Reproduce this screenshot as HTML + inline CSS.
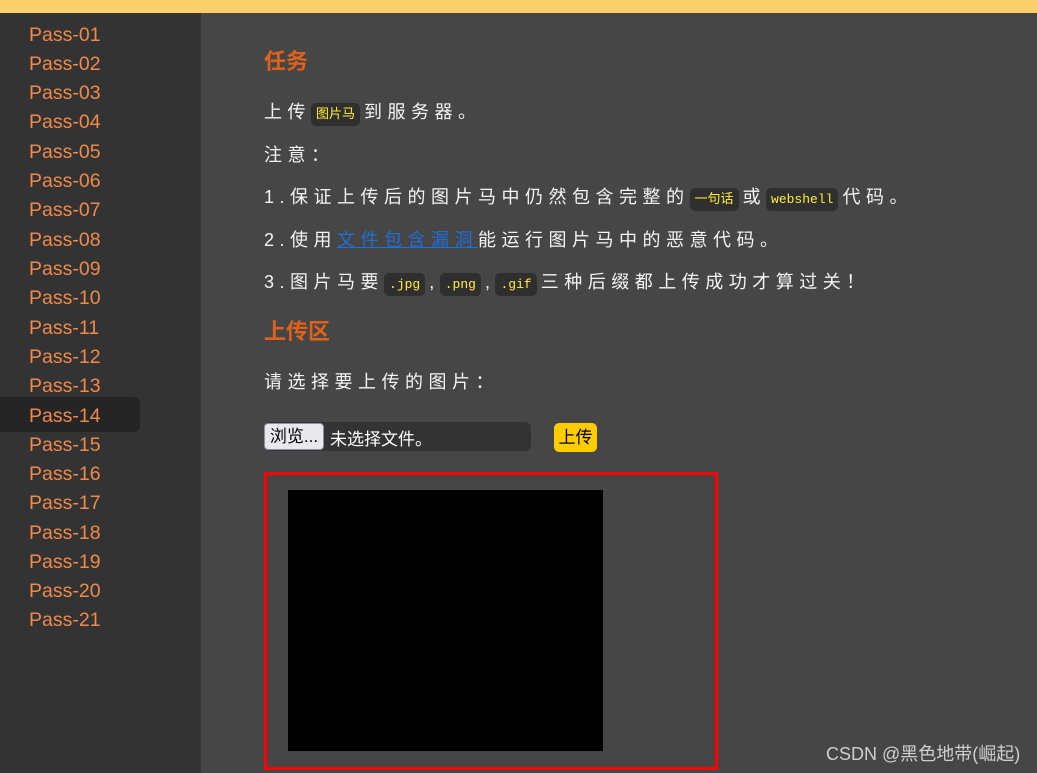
<!DOCTYPE html>
<html><head><meta charset="utf-8"><style>
*{margin:0;padding:0;box-sizing:border-box}
body{width:1037px;height:773px;overflow:hidden;background:#464646;font-family:"Liberation Sans","Noto Sans CJK SC",sans-serif;position:relative}
.top{position:absolute;left:0;top:0;width:1037px;height:13px;background:#fbcf6b}
.side{position:absolute;left:0;top:13px;width:201px;height:760px;background:#333}
.act{position:absolute;left:0;top:397px;width:140px;height:35px;background:#252525;border-radius:0 6px 6px 0}
.p{position:absolute;left:29px;font-size:19.5px;color:#f08a4b;line-height:22px}
.h{position:absolute;left:264px;font-size:22px;font-weight:bold;color:#e0621a;line-height:26px}
.t{position:absolute;left:264px;font-size:18px;color:#f4f4f4;letter-spacing:5.5px;line-height:24px;white-space:nowrap}
code{font-family:"Liberation Mono","Noto Sans CJK SC",monospace;font-size:13px;color:#ffee33;background:#2f2f2f;border-radius:5px;padding:4px 5px;letter-spacing:0;margin:0 4px 0 0}
a{color:#1f6fd6;text-decoration:underline}
.file{position:absolute;left:264px;top:422px;width:267px;height:29px;background:#333;border-radius:6px}
.btn{position:absolute;left:0;top:1px;width:60px;height:27px;background:#e9e9ed;border:1px solid #8f8f9d;border-radius:4px;font-size:17px;color:#000;text-align:center;line-height:25px}
.fn{position:absolute;left:66px;top:3px;font-size:17px;color:#fff}
.up{position:absolute;left:554px;top:423px;width:43px;height:29px;background:#ffcc00;border-radius:5px;font-size:17px;color:#000;text-align:center;line-height:29px}
.box{position:absolute;left:264px;top:472px;width:454px;height:298px;border:3px solid #f00}
.img{position:absolute;left:288px;top:490px;width:315px;height:261px;background:#000}
.wm{position:absolute;left:826px;top:740px;font-size:18px;color:#cfcfcf}
</style></head><body>
<div class="top"></div>
<div class="side"></div>
<div class="act"></div>
<div class="p" style="top:24px">Pass-01</div>
<div class="p" style="top:53px">Pass-02</div>
<div class="p" style="top:82px">Pass-03</div>
<div class="p" style="top:111px">Pass-04</div>
<div class="p" style="top:141px">Pass-05</div>
<div class="p" style="top:170px">Pass-06</div>
<div class="p" style="top:199px">Pass-07</div>
<div class="p" style="top:229px">Pass-08</div>
<div class="p" style="top:258px">Pass-09</div>
<div class="p" style="top:287px">Pass-10</div>
<div class="p" style="top:317px">Pass-11</div>
<div class="p" style="top:346px">Pass-12</div>
<div class="p" style="top:375px">Pass-13</div>
<div class="p" style="top:405px">Pass-14</div>
<div class="p" style="top:434px">Pass-15</div>
<div class="p" style="top:463px">Pass-16</div>
<div class="p" style="top:492px">Pass-17</div>
<div class="p" style="top:522px">Pass-18</div>
<div class="p" style="top:551px">Pass-19</div>
<div class="p" style="top:580px">Pass-20</div>
<div class="p" style="top:609px">Pass-21</div>

<div class="h" style="top:49px">任务</div>
<div class="t" style="top:100px">上传<code>图片马</code>到服务器。</div>
<div class="t" style="top:143px">注意：</div>
<div class="t" style="top:185px">1.保证上传后的图片马中仍然包含完整的<code>一句话</code>或<code>webshell</code>代码。</div>
<div class="t" style="top:228px">2.使用<a>文件包含漏洞</a>能运行图片马中的恶意代码。</div>
<div class="t" style="top:270px">3.图片马要<code>.jpg</code>,<code>.png</code>,<code>.gif</code>三种后缀都上传成功才算过关！</div>
<div class="h" style="top:319px">上传区</div>
<div class="t" style="top:370px">请选择要上传的图片：</div>
<div class="file"><div class="btn">浏览...</div><div class="fn">未选择文件。</div></div>
<div class="up">上传</div>
<div class="box"></div>
<div class="img"></div>
<div class="wm">CSDN @黑色地带(崛起)</div>
</body></html>
